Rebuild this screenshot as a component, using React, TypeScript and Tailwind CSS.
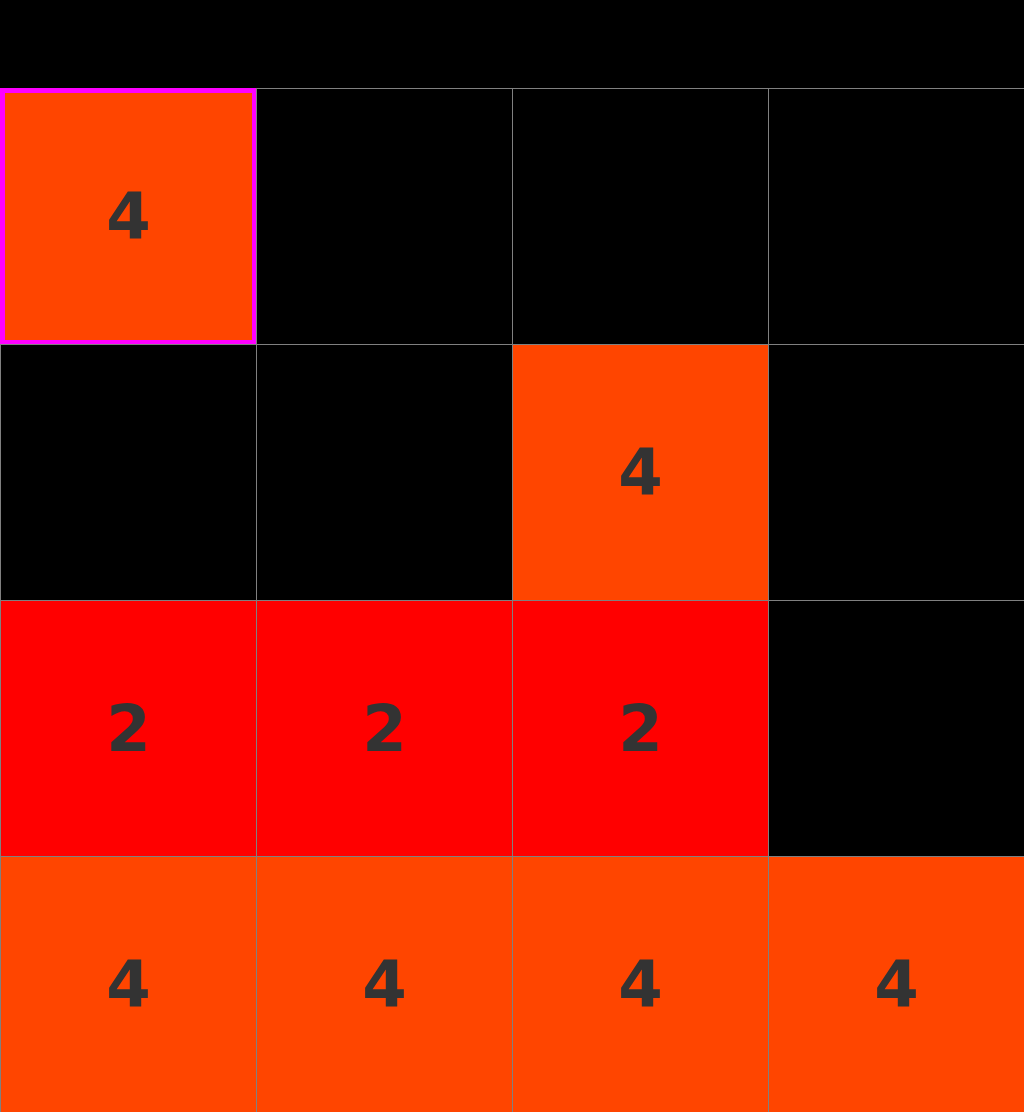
const board: number[][] = [
  [4, 0, 0, 0],
  [0, 0, 4, 0],
  [2, 2, 2, 0],
  [4, 4, 4, 4],
];

// tile colour by value
const tileBg = (v: number) => {
  if (v === 2) return 'bg-[#ff0000]';
  if (v === 4) return 'bg-[#ff4500]';
  return 'bg-black';
};

export default function App() {
  return (
    <div className="w-[1024px] h-[1112px] bg-black flex flex-col" style={{ fontFamily: '"DejaVu Sans", sans-serif' }}>
      {/* Top bar */}
      <div className="h-[88px] shrink-0 bg-black" />

      {/* Board */}
      <div className="grid grid-cols-4 grid-rows-4 flex-1">
        {board.flatMap((row, r) =>
          row.map((v, c) => {
            const selected = r === 0 && c === 0;
            return (
              <div
                key={`${r}-${c}`}
                className={`flex items-center justify-center w-[256px] h-[256px] ${tileBg(v)} ${
                  selected
                    ? 'border-l-[5px] border-t-[5px] border-r-4 border-b-4 border-[#ff00ff]'
                    : 'border-l border-t border-[#808080]'
                }`}
              >
                {v > 0 && (
                  <span className="text-[64px] font-bold leading-none text-[#333333]">{v}</span>
                )}
              </div>
            );
          })
        )}
      </div>
    </div>
  );
}
